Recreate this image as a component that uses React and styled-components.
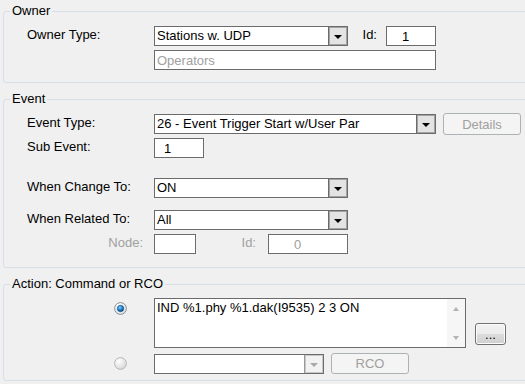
import React from "react";
import styled, { createGlobalStyle } from "styled-components";

const GlobalStyle = createGlobalStyle`
  html, body { margin: 0; padding: 0; background: #f0f0f0; overflow: hidden; }
  body {
    width: 525px; height: 384px;
    font-family: "Liberation Sans", Arial, sans-serif;
    font-size: 13px; color: #000;
  }
  * { box-sizing: border-box; }
`;

const Page = styled.div`
  display: flex;
  flex-direction: column;
  gap: 8px;
  width: 540px;
  padding: 3px 0 0 3px;
`;

const Group = styled.fieldset`
  margin: 0;
  padding: 0;
  min-width: 0;
  border: 1px solid #d5dfe5;
  border-radius: 3px;
`;

const Legend = styled.legend`
  margin-left: 6px;
  padding: 0 2px;
  line-height: 16px;
  font-size: 13px;
`;

const GroupBody = styled.div`
  display: flex;
  flex-direction: column;
  padding: ${(p) => p.$top}px 0 ${(p) => p.$bottom}px 23px;
`;

const Row = styled.div`
  display: flex;
  align-items: ${(p) => p.$align || "center"};
  margin-top: ${(p) => p.$mt || 0}px;
`;

const Label = styled.div`
  width: 127px;
  flex: none;
  line-height: 16px;
  margin-top: -2px;
  color: ${(p) => (p.$disabled ? "#a0a0a0" : "#000")};
  text-align: ${(p) => (p.$right ? "right" : "left")};
  padding-right: ${(p) => (p.$right ? 11 : 0)}px;
`;

const SideLabel = styled.div`
  width: ${(p) => p.$w}px;
  flex: none;
  text-align: right;
  padding-right: ${(p) => p.$pr}px;
  line-height: 16px;
  margin-top: -2px;
  color: ${(p) => (p.$disabled ? "#a0a0a0" : "#000")};
`;

const Combo = styled.div`
  display: flex;
  flex: none;
  width: ${(p) => p.$w}px;
  height: 20px;
  border: 1px solid #6b6b6b;
  background: #fff;
`;

const ComboText = styled.div`
  flex: 1;
  padding-left: 2px;
  line-height: 18px;
  white-space: nowrap;
  overflow: hidden;
`;

const DropButton = styled.div`
  width: 19px;
  height: 100%;
  flex: none;
  display: flex;
  align-items: center;
  justify-content: center;
  border-left: 1px solid ${(p) => (p.$disabled ? "#9a9a9a" : "#6b6b6b")};
  box-shadow: inset 0 0 0 1px ${(p) => (p.$disabled ? "#c8c8c8" : "#a3a3a3")};
  background: ${(p) => (p.$disabled ? "#f2f2f2" : "#e3e3e3")};
`;

const Arrow = styled.span`
  width: 0;
  height: 0;
  margin-top: 2px;
  border-left: 4px solid transparent;
  border-right: 4px solid transparent;
  border-top: 4px solid ${(p) => (p.$disabled ? "#a8a8a8" : "#000")};
`;

const TextBox = styled.input`
  flex: none;
  width: ${(p) => p.$w}px;
  height: 20px;
  margin: 0;
  padding: 0 0 0 ${(p) => p.$pl || 2}px;
  border: 1px solid #6b6b6b;
  border-radius: 0;
  background: #fff;
  font: inherit;
  font-size: 13px;
  line-height: 18px;
  color: ${(p) => (p.$disabled ? "#a0a0a0" : "#000")};
  outline: none;
`;

const PushButton = styled.button`
  flex: none;
  width: ${(p) => p.$w}px;
  height: ${(p) => p.$h}px;
  margin: 0 0 0 ${(p) => p.$ml || 0}px;
  padding: 0;
  border-radius: 3px;
  font: inherit;
  font-size: 13px;
  line-height: 1;
  border: 1px solid ${(p) => (p.disabled ? "#adb2b5" : "#707070")};
  color: ${(p) => (p.disabled ? "#a0a0a0" : "#000")};
  background: ${(p) =>
    p.disabled
      ? "#f4f4f4"
      : "linear-gradient(#f2f2f2 0%, #ebebeb 50%, #dddddd 51%, #cfcfcf 100%)"};
  box-shadow: inset 0 0 0 1px ${(p) => (p.disabled ? "#f4f4f4" : "#fcfcfc")};
`;

const Memo = styled.div`
  display: flex;
  flex: none;
  width: 312px;
  height: 50px;
  border: 1px solid #6b6b6b;
  background: #fff;
`;

const MemoText = styled.div`
  flex: 1;
  padding: 1px 0 0 2px;
  line-height: 16px;
  white-space: nowrap;
  overflow: hidden;
`;

const ScrollBar = styled.div`
  width: 18px;
  flex: none;
  display: flex;
  flex-direction: column;
  justify-content: space-between;
  align-items: center;
  padding: 8px 0 7px;
  background: #f6f6f6;
`;

const ScrollArrow = styled.span`
  width: 0;
  height: 0;
  border-left: 3.5px solid transparent;
  border-right: 3.5px solid transparent;
  ${(p) =>
    p.$up ? "border-bottom: 4px solid #b4b4b4;" : "border-top: 4px solid #b4b4b4;"}
`;

const RadioCell = styled.div`
  width: 127px;
  flex: none;
  display: flex;
  justify-content: flex-end;
  padding-right: 27px;
  align-self: ${(p) => (p.$top ? "flex-start" : "center")};
  margin-top: ${(p) => (p.$top ? 4 : 0)}px;
  svg { display: block; }
`;

const SideButtonWrap = styled.div`
  align-self: flex-end;
  margin: 0 0 3px 9px;
  display: flex;
`;

function Radio({ checked }) {
  const id = checked ? "rOn" : "rOff";
  return (
    <svg width="13" height="13" viewBox="0 0 13 13">
      <defs>
        <radialGradient id={id + "bg"} cx="0.35" cy="0.3" r="0.8">
          <stop offset="0" stopColor="#ffffff" />
          <stop offset="1" stopColor={checked ? "#d9dde2" : "#d4d4d4"} />
        </radialGradient>
        <radialGradient id={id + "dot"} cx="0.4" cy="0.35" r="0.7">
          <stop offset="0" stopColor="#8fd0ff" />
          <stop offset="0.5" stopColor="#1b86d6" />
          <stop offset="1" stopColor="#0b3c72" />
        </radialGradient>
      </defs>
      <circle cx="6.5" cy="6.5" r="5.9" fill={`url(#${id}bg)`} stroke={checked ? "#8a9096" : "#b6b6b6"} strokeWidth="1" />
      {checked && <circle cx="6.5" cy="6.5" r="3.2" fill={`url(#${id}dot)`} stroke="#1c4f85" strokeWidth="0.6" />}
    </svg>
  );
}

function ComboBox({ w, value, disabled }) {
  return (
    <Combo $w={w}>
      <ComboText>{value}</ComboText>
      <DropButton $disabled={disabled}>
        <Arrow $disabled={disabled} />
      </DropButton>
    </Combo>
  );
}

export default function App() {
  return (
    <>
      <GlobalStyle />
      <Page>
        <Group>
          <Legend>Owner</Legend>
          <GroupBody $top={7} $bottom={12}>
            <Row>
              <Label>Owner Type:</Label>
              <ComboBox w={194} value="Stations w. UDP" />
              <SideLabel $w={38} $pr={9}>Id:</SideLabel>
              <TextBox $w={50} $pl={15} defaultValue="1" readOnly />
            </Row>
            <Row $mt={4}>
              <Label />
              <TextBox $w={282} $pl={2} $disabled defaultValue="Operators" readOnly />
            </Row>
          </GroupBody>
        </Group>

        <Group>
          <Legend>Event</Legend>
          <GroupBody $top={6} $bottom={13}>
            <Row>
              <Label>Event Type:</Label>
              <ComboBox w={282} value="26 - Event Trigger Start w/User Par" />
              <PushButton $w={78} $h={22} $ml={7} disabled>Details</PushButton>
            </Row>
            <Row $mt={3}>
              <Label>Sub Event:</Label>
              <TextBox $w={50} $pl={9} defaultValue="1" readOnly />
            </Row>
            <Row $mt={20}>
              <Label>When Change To:</Label>
              <ComboBox w={194} value="ON" />
            </Row>
            <Row $mt={12}>
              <Label>When Related To:</Label>
              <ComboBox w={194} value="All" />
            </Row>
            <Row $mt={4}>
              <Label $right $disabled>Node:</Label>
              <TextBox $w={42} readOnly defaultValue="" />
              <SideLabel $w={72} $pr={12} $disabled>Id:</SideLabel>
              <TextBox $w={80} $pl={25} $disabled defaultValue="0" readOnly />
            </Row>
          </GroupBody>
        </Group>

        <Group>
          <Legend>Action: Command or RCO</Legend>
          <GroupBody $top={6} $bottom={6}>
            <Row $align="stretch">
              <RadioCell $top>
                <Radio checked />
              </RadioCell>
              <Memo>
                <MemoText>IND %1.phy %1.dak(I9535) 2 3 ON</MemoText>
                <ScrollBar>
                  <ScrollArrow $up />
                  <ScrollArrow />
                </ScrollBar>
              </Memo>
              <SideButtonWrap>
                <PushButton $w={31} $h={22}>...</PushButton>
              </SideButtonWrap>
            </Row>
            <Row $mt={5}>
              <RadioCell>
                <Radio />
              </RadioCell>
              <ComboBox w={170} value="" disabled />
              <PushButton $w={78} $h={21} $ml={7} disabled>RCO</PushButton>
            </Row>
          </GroupBody>
        </Group>
      </Page>
    </>
  );
}
